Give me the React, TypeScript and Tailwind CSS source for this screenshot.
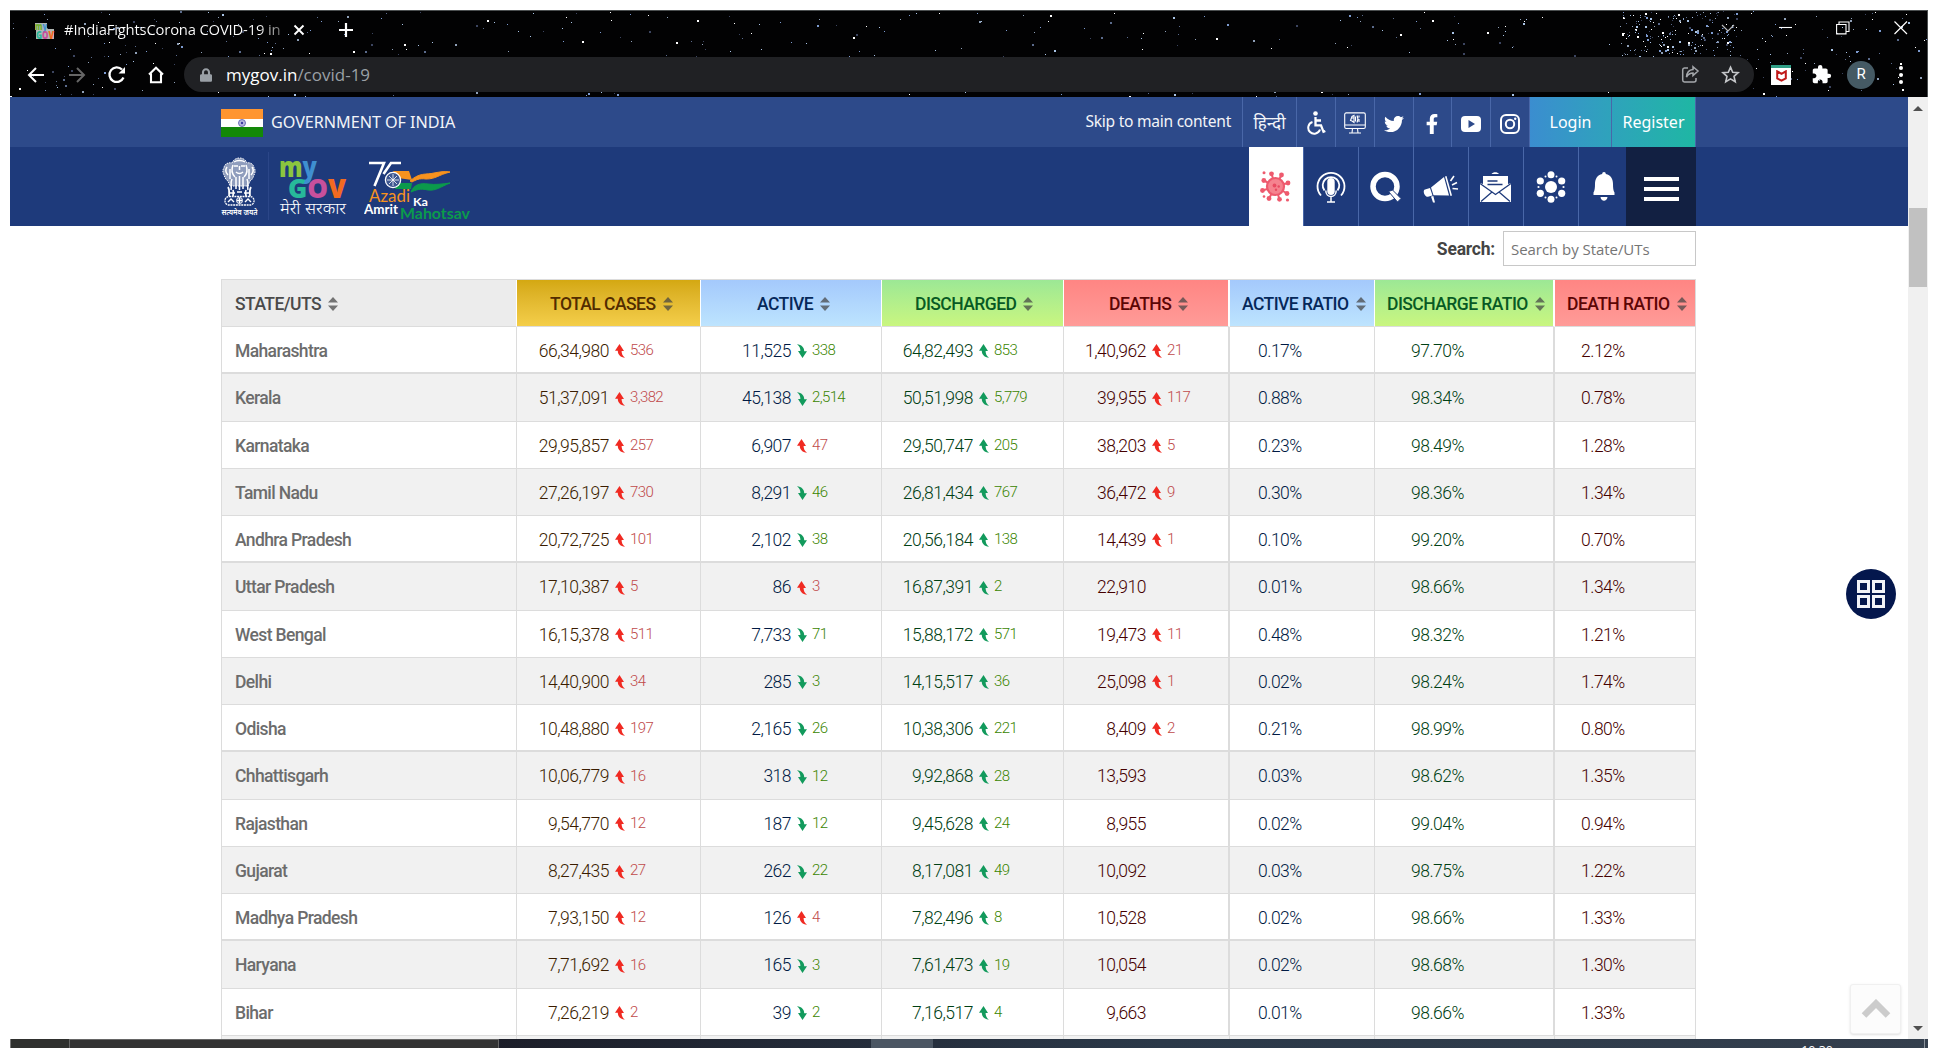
import React from "react";
import { FaTwitter, FaFacebookF, FaLock } from "react-icons/fa";
import { MdExtension } from "react-icons/md";

type Dir = "u" | "d";
type Row = {
  state: string;
  total: [string, string];
  active: [string, string, Dir];
  discharged: [string, string];
  deaths: [string, string];
  ratios: [string, string, string];
};

const r = (
  state: string, t: string, td: string, a: string, ad: string, dir: Dir,
  d: string, dd: string, x: string, xd: string, r1: string, r2: string, r3: string,
): Row => ({ state, total: [t, td], active: [a, ad, dir], discharged: [d, dd], deaths: [x, xd], ratios: [r1, r2, r3] });

const rows: Row[] = [
  r("Maharashtra", "66,34,980", "536", "11,525", "338", "d", "64,82,493", "853", "1,40,962", "21", "0.17%", "97.70%", "2.12%"),
  r("Kerala", "51,37,091", "3,382", "45,138", "2,514", "d", "50,51,998", "5,779", "39,955", "117", "0.88%", "98.34%", "0.78%"),
  r("Karnataka", "29,95,857", "257", "6,907", "47", "u", "29,50,747", "205", "38,203", "5", "0.23%", "98.49%", "1.28%"),
  r("Tamil Nadu", "27,26,197", "730", "8,291", "46", "d", "26,81,434", "767", "36,472", "9", "0.30%", "98.36%", "1.34%"),
  r("Andhra Pradesh", "20,72,725", "101", "2,102", "38", "d", "20,56,184", "138", "14,439", "1", "0.10%", "99.20%", "0.70%"),
  r("Uttar Pradesh", "17,10,387", "5", "86", "3", "u", "16,87,391", "2", "22,910", "", "0.01%", "98.66%", "1.34%"),
  r("West Bengal", "16,15,378", "511", "7,733", "71", "d", "15,88,172", "571", "19,473", "11", "0.48%", "98.32%", "1.21%"),
  r("Delhi", "14,40,900", "34", "285", "3", "d", "14,15,517", "36", "25,098", "1", "0.02%", "98.24%", "1.74%"),
  r("Odisha", "10,48,880", "197", "2,165", "26", "d", "10,38,306", "221", "8,409", "2", "0.21%", "98.99%", "0.80%"),
  r("Chhattisgarh", "10,06,779", "16", "318", "12", "d", "9,92,868", "28", "13,593", "", "0.03%", "98.62%", "1.35%"),
  r("Rajasthan", "9,54,770", "12", "187", "12", "d", "9,45,628", "24", "8,955", "", "0.02%", "99.04%", "0.94%"),
  r("Gujarat", "8,27,435", "27", "262", "22", "d", "8,17,081", "49", "10,092", "", "0.03%", "98.75%", "1.22%"),
  r("Madhya Pradesh", "7,93,150", "12", "126", "4", "u", "7,82,496", "8", "10,528", "", "0.02%", "98.66%", "1.33%"),
  r("Haryana", "7,71,692", "16", "165", "3", "d", "7,61,473", "19", "10,054", "", "0.02%", "98.68%", "1.30%"),
  r("Bihar", "7,26,219", "2", "39", "2", "d", "7,16,517", "4", "9,663", "", "0.01%", "98.66%", "1.33%"),
];

const GRID = "grid grid-cols-[295px_184px_181px_182px_166px_145px_180px_141px]";

function makeStars() {
  let seed = 7;
  const rnd = () => {
    seed = (seed * 1664525 + 1013904223) % 4294967296;
    return seed / 4294967296;
  };
  const tints = ["#7d9bd0", "#ffffff", "#5b6b8c", "#a9c4e6", "#3c4560", "#8fa0b8"];
  const out: { x: number; y: number; s: number; c: string }[] = [];
  const zone = (n: number, x0: number, x1: number, y0: number, y1: number) => {
    for (let i = 0; i < n; i++) {
      const s = rnd() > 0.75 ? 2 : 1;
      out.push({ x: Math.round(x0 + rnd() * (x1 - x0)), y: Math.round(y0 + rnd() * (y1 - y0)), s, c: tints[Math.floor(rnd() * 6)] });
    }
  };
  zone(130, 0, 300, 0, 87);
  zone(70, 300, 600, 0, 87);
  zone(60, 600, 900, 0, 87);
  zone(80, 900, 1300, 0, 87);
  zone(70, 1300, 1600, 0, 87);
  zone(220, 1610, 1730, 0, 46);
  zone(100, 1720, 1918, 0, 87);
  return out;
}
const stars = makeStars();

function Stars() {
  return (
    <svg className="absolute inset-0" width="1918" height="87" shapeRendering="crispEdges">
      {stars.map((s, i) => <rect key={i} x={s.x} y={s.y} width={s.s} height={s.s} fill={s.c} />)}
    </svg>
  );
}

function Favicon() {
  return (
    <svg className="mt-[2px] shrink-0" width="21" height="18" viewBox="0 0 21 18" fontFamily="Open Sans, sans-serif" fontWeight="800">
      <path d="M1 1h12v6h7v10H2V8H1z" fill="#eef4f0" fillOpacity=".75" />
      <text x="1" y="7.500" fontSize="10" textLength="12" lengthAdjust="spacingAndGlyphs"><tspan fill="#6fae2c">m</tspan><tspan fill="#3f8fd0">y</tspan></text>
      <text x="2" y="16.500" fontSize="10.500" textLength="18" lengthAdjust="spacingAndGlyphs"><tspan fill="#27b99a">G</tspan><tspan fill="#c8509c">O</tspan><tspan fill="#f26a21">V</tspan></text>
    </svg>
  );
}

function Chrome() {
  return (
    <div className="relative h-[87px] overflow-hidden border-t border-r border-[#4b4f50] bg-[#020203] font-['Open_Sans',sans-serif] text-white">
      <Stars />
      <div className="relative flex h-[46px] items-start">
        <div className="flex h-[38px] w-[300px] items-center pl-[24px]">
          <Favicon />
          <span className="ml-[9px] w-[216px] bg-gradient-to-r from-white from-90% to-[#777] to-100% bg-clip-text pb-[2px] text-[14.800px] tracking-[-0.18px] whitespace-nowrap text-transparent">#IndiaFightsCorona COVID-19 in</span>
          <svg className="ml-[13px] shrink-0" width="12" height="12" viewBox="0 0 12 12" stroke="#fff" strokeWidth="1.900"><path d="M1.500 1.500l9 9M10.500 1.500l-9 9" /></svg>
        </div>
        <svg className="mt-[11px] ml-[28px]" width="16" height="16" viewBox="0 0 16 16" stroke="#fff" strokeWidth="2.200"><path d="M8 1v14M1 8h14" /></svg>
        <svg className="mt-[12px] ml-[1366px]" width="16" height="10" viewBox="0 0 16 10" fill="none" stroke="#bbb" strokeWidth="1.200"><path d="M2 2l6 6 6-6" /></svg>
        <svg className="mt-[15px] ml-[43px]" width="14" height="4"><path d="M0 1.500h13" stroke="#fff" strokeWidth="1.100" /></svg>
        <svg className="mt-[10px] ml-[43px]" width="14" height="14" fill="none" stroke="#fff" strokeWidth="1.100"><path d="M.6 3.500h9.400v9.400H.6zM3 3.500V1h10v9.500h-3" /></svg>
        <svg className="mt-[10px] ml-[44px]" width="14" height="14" stroke="#fff" strokeWidth="1.200"><path d="M.5.5l12.500 12.500M13 .5L.5 13" /></svg>
      </div>
      <div className="relative flex h-[35px] items-center pl-[17px]">
        <svg width="18" height="18" viewBox="0 0 18 18" fill="none" stroke="#fff" strokeWidth="2"><path d="M17 9H2.500M9 2L2 9l7 7" /></svg>
        <svg className="ml-[23px]" width="18" height="18" viewBox="0 0 18 18" fill="none" stroke="#666" strokeWidth="2"><path d="M1 9h14.500M9 2l7 7-7 7" /></svg>
        <svg className="ml-[21px]" width="20" height="20" viewBox="0 0 20 20" fill="none" stroke="#fff" strokeWidth="2.300"><path d="M16.500 12.500A7.300 7.300 0 1 1 15 4.500" /><path d="M11.500 8.500H18V2z" fill="#fff" stroke="none" /></svg>
        <svg className="ml-[20px]" width="18" height="18" viewBox="0 0 18 18" fill="none" stroke="#fff" strokeWidth="2.100"><path d="M2 8.600L9 1.800l7 6.800M4 7.500v8.700h10V7.500" /></svg>
        <div className="ml-[19px] flex h-[35px] w-[1570px] items-center rounded-full bg-[#202124] pl-[17px] text-[17px]">
          <FaLock className="-ml-px h-[14px] w-[12px] text-[#9aa0a6]" />
          <span className="ml-[14px] leading-none text-white">mygov.in<span className="text-[#9aa0a6]">/covid-19</span></span>
          <svg className="ml-auto" width="19" height="19" viewBox="0 0 19 19" fill="none" stroke="#a5a8ac" strokeWidth="1.500"><path d="M7 3H3.500A2 2 0 0 0 1.700 5v10a2 2 0 0 0 1.800 2H13a2 2 0 0 0 2-2v-2" /><path d="M12 1.700l5 4.300-5 4.500V8C8.500 8 7 9.500 5.500 12 5.800 8 8 4.800 12 4.500z" /></svg>
          <svg className="mr-[14px] ml-[21px]" width="19" height="19" viewBox="0 0 20 20" fill="none" stroke="#c3c5c8" strokeWidth="1.700"><path d="M10 2.300l2.300 5.300 5.700.5-4.300 3.800 1.300 5.700-5-3-5 3 1.300-5.700L2 8.100l5.700-.5z" /></svg>
        </div>
        <span className="ml-[17px] flex h-[20px] w-[20px] items-center justify-center border-t-[3px] border-[#2f9e86] bg-white">
          <svg width="11" height="12" viewBox="0 0 11 12" fill="none" stroke="#c01818" strokeWidth="2"><path d="M1.200 1.300v7.200L5.500 10.700 9.800 8.500V1.300L5.500 3.800z" /></svg>
        </span>
        <MdExtension className="ml-[20px] h-[21px] w-[21px]" />
        <span className="ml-[15px] flex h-[28px] w-[28px] items-center justify-center rounded-full bg-[#455a64] font-['Roboto'] text-[15px]">R</span>
        <span className="ml-[24px] flex flex-col gap-[3px]">
          <i className="h-[4px] w-[4px] rounded-full bg-white" /><i className="h-[4px] w-[4px] rounded-full bg-white" /><i className="h-[4px] w-[4px] rounded-full bg-white" />
        </span>
      </div>
    </div>
  );
}

function Flag() {
  return (
    <svg className="mt-px" width="42" height="28" viewBox="0 0 42 28">
      <path fill="#ff9530" d="M0 0h42v10H0z" /><path fill="#fff" d="M0 10h42v8H0z" /><path fill="#138808" d="M0 18h42v10H0z" />
      <circle cx="21" cy="14" r="3.500" fill="#b9b9e0" stroke="#5656b0" strokeWidth=".8" /><circle cx="21" cy="14" r="1.200" fill="#3c3ca0" />
    </svg>
  );
}

function ScreenReader() {
  return (
    <svg width="22" height="22" viewBox="0 0 22 22" fill="none" stroke="#fff" strokeWidth="1.100">
      <rect x=".7" y=".9" width="20.600" height="15.600" rx="1.500" /><path d="M1 13h20M8.500 16.500L8 21M13.500 16.500l.5 4.500M5 21h12" />
      <path d="M6.500 8.500l1.500-4 2-1v7l-2-1.500zM8 6h2M11.500 4.500v5M13 3.500c1 2 1 5 0 7M15 3.500v2M15 7v3" />
    </svg>
  );
}

function TopBar() {
  const cell = "flex h-[50px] items-center justify-center border-l border-[#4967a8]";
  return (
    <div className="flex h-[50px] items-center bg-[#2d4a8a] pl-[211px] font-['Noto_Sans',sans-serif] text-[#f2f4f8]">
      <Flag />
      <span className="ml-[8px] text-[16.200px] tracking-[-0.050px]">GOVERNMENT OF INDIA</span>
      <div className="ml-auto flex items-center pr-[212px]">
        <span className="mr-[11px] text-[15.600px] tracking-[-0.27px]">Skip to main content</span>
        <span className={`${cell} w-[54px] pt-[2px] text-[17px]`}>हिन्दी</span>
        <span className={`${cell} w-[39px] pt-[2px]`}>
          <svg width="19" height="24" viewBox="0 0 19 24" fill="none" stroke="#fff" strokeWidth="2"><circle cx="8.500" cy="2.500" r="2.300" fill="#fff" stroke="none" /><path d="M8.500 6v8.300h5.500l2.500 6.500 1.800-.8M8.500 9.500h5.500" strokeWidth="2.300" /><path d="M5.500 11A6 6 0 1 0 13 18.500" /></svg>
        </span>
        <span className={`${cell} w-[39px] pt-[2px]`}><ScreenReader /></span>
        <span className={`${cell} w-[39px] pt-[3px]`}><FaTwitter className="h-[20px] w-[20px] text-white" /></span>
        <span className={`${cell} w-[38px] pt-[3px] pr-[2px]`}><FaFacebookF className="h-[20px] w-[14px] text-white" /></span>
        <span className={`${cell} w-[39px] pt-[3px]`}>
          <svg width="20" height="16" viewBox="0 0 20 16"><rect width="20" height="16" rx="4" fill="#fff" /><path d="M7.500 4l6.500 4-6.500 4z" fill="#2d4a8a" /></svg>
        </span>
        <span className={`${cell} w-[39px] pt-[3px]`}>
          <svg width="20" height="20" viewBox="0 0 20 20" fill="none" stroke="#fff" strokeWidth="2"><rect x="1" y="1" width="18" height="18" rx="5" /><circle cx="10" cy="10" r="4.200" /><circle cx="15.200" cy="4.800" r="1.200" fill="#fff" stroke="none" /></svg>
        </span>
        <div className="flex bg-gradient-to-r from-[#3b8dd0] to-[#1eb7a3] text-[16px] text-white">
          <span className={`${cell} w-[82px]`}>Login</span>
          <span className={`${cell} w-[85px] border-r`}>Register</span>
        </div>
      </div>
    </div>
  );
}

function Emblem() {
  return (
    <svg width="37" height="61" viewBox="0 0 37 61" fill="none" stroke="#fff">
      <path d="M11 6c1-3 4-5 7.500-5S25 3 26 6c4-1 7 2 7 5 2 2 1 5 0 7-1 3-2 5-4 6l-2 5H9l-2-5c-2-1-3-3-4-6-1-2-2-5 0-7 0-3 3-6 8-5z" fill="#fff" fillOpacity=".5" strokeDasharray="1.500 1" />
      <path d="M13 5c3-2 8-2 11 0M13 9h4M20 9h4M18.500 9v4M15 15c2 2 5 2 7 0M12 8c-2 5-1 9 2 12M25 8c2 5 1 9-2 12M6 10c-2 3-1 6 1 8M31 10c2 3 1 6-1 8M9 12v10M28 12v10M15 20v12M22 20v12M18.500 19v14M11 22c-2 4 0 7-1 11M26 22c2 4 0 7 1 11" strokeWidth="1.500" />
      <path d="M7 30c2 3 1 7 1 9M30 30c-2 3-1 7-1 9M12 33c1 3 0 4 0 6M25 33c-1 3 0 4 0 6M8 36h6M23 36h6M16 35h5" strokeWidth="1.700" />
      <rect x="4" y="39.500" width="29" height="8.500" rx="4" strokeDasharray="2 .7" strokeWidth="1.300" />
      <circle cx="18.500" cy="43.500" r="3" /><path d="M7 45l3-3 3 3M24 45l3-3 3 3M18.500 41v5M16 43.500h5" strokeWidth="1.400" />
      <text x="18.500" y="57.500" textAnchor="middle" fontSize="8" fontWeight="600" textLength="36" lengthAdjust="spacingAndGlyphs" fill="#fff" stroke="none" fontFamily="Noto Sans Devanagari, Noto Sans, sans-serif">सत्यमेव जयते</text>
    </svg>
  );
}

function MyGov() {
  return (
    <svg width="68" height="62" viewBox="0 0 68 62" fontFamily="Open Sans, sans-serif">
      <text x="0" y="19.500" fontSize="28" fontWeight="800" textLength="38" lengthAdjust="spacingAndGlyphs"><tspan fill="#8bc53f">m</tspan><tspan fill="#3f8fd0">y</tspan></text>
      <text x="9" y="40.500" fontSize="26" fontWeight="800" textLength="58" lengthAdjust="spacingAndGlyphs"><tspan fill="#27b99a">G</tspan><tspan fill="#c8509c">O</tspan><tspan fill="#f26a21">V</tspan></text>
      <text x="1" y="56.500" fontSize="15.500" fontWeight="300" textLength="66" lengthAdjust="spacingAndGlyphs" fill="#fff" fontFamily="Noto Sans Devanagari, Noto Sans, sans-serif">मेरी सरकार</text>
    </svg>
  );
}

function Azadi() {
  return (
    <svg width="108" height="60" viewBox="0 0 108 60" fontFamily="Lato, sans-serif">
      <path d="M5 2h15L10.500 25M37 2H27L19.500 13" fill="none" stroke="#fff" strokeWidth="2.600" />
      <path d="M29 10h16l3 9-14-2z" fill="#f7921e" /><path d="M46 20c10-9 16-6 24-8 6-1 10-2 16-1-12 3-14 7-24 7-7-1-10 1-14 3z" fill="#f7921e" stroke="#f7921e" />
      <path d="M34 22h14l-1 6H31z" fill="#0b9a4c" /><path d="M47 31c3-8 10-9 17-8 8 1 14 0 22-1-10 4-14 8-22 7-8-2-12 0-17 2z" fill="#0b9a4c" stroke="#0b9a4c" />
      <circle cx="29" cy="19" r="7.600" fill="#3d5690" stroke="#fff" strokeWidth="1.300" /><path d="M29 13v12M23 19h12M25 15l8 8M33 15l-8 8" stroke="#fff" strokeWidth=".8" />
      <text x="5" y="41" fontSize="18" textLength="41" lengthAdjust="spacingAndGlyphs" fill="#f7921e">Azadi</text>
      <text x="49" y="45" fontSize="12" textLength="15" lengthAdjust="spacingAndGlyphs" fill="#fff" fontWeight="700">Ka</text>
      <text x="0" y="53" fontSize="13" textLength="34" lengthAdjust="spacingAndGlyphs" fill="#fff" fontWeight="700">Amrit</text>
      <text x="36" y="57.500" fontSize="14.500" textLength="70" lengthAdjust="spacingAndGlyphs" fill="#0b9a4c" fontWeight="700">Mahotsav</text>
    </svg>
  );
}

function Virus() {
  const arms = [[11.5, 2.8], [21.5, 4], [28, 12], [27, 22.5], [19.5, 28.3], [9, 27.5], [2.5, 19.5], [3.8, 9.5]];
  return (
    <svg width="31" height="31" viewBox="0 0 31 31">
      {arms.map((a, i) => <g key={i}><path d={`M15.5 15.5L${a[0]} ${a[1]}`} stroke="#ee5a6e" strokeWidth="2" /><circle cx={a[0]} cy={a[1]} r="2.400" fill="#ee5a6e" /></g>)}
      <circle cx="4" cy="1.800" r="1.500" fill="#ee5a6e" /><circle cx="4" cy="25.500" r="1.300" fill="#ee5a6e" /><circle cx="27.500" cy="29" r="1.600" fill="#ee5a6e" />
      <circle cx="15.500" cy="15.500" r="8.500" fill="#f5838f" stroke="#ee5a6e" strokeWidth="2.200" />
      <circle cx="14.500" cy="14.500" r="1.900" fill="#e84b62" /><circle cx="18.700" cy="15.500" r="1.200" fill="#e84b62" /><circle cx="16" cy="18.700" r="1.200" fill="#e84b62" />
    </svg>
  );
}

function NavBar() {
  const cell = "flex h-[79px] items-center justify-center border-l border-[#4967a8]";
  return (
    <div className="flex h-[79px] bg-[#1e3a7b] pl-[211px]">
      <div className="flex pt-[10px]">
        <Emblem />
        <div className="mx-[10px] -mt-[5px] h-[68px] w-px bg-[#2b4688]" />
        <MyGov />
        <div className="ml-[17px] pt-[4px]"><Azadi /></div>
      </div>
      <div className="ml-auto flex pr-[212px]">
        <span className="flex h-[79px] w-[54px] items-center justify-center bg-white pr-px"><Virus /></span>
        <span className={`${cell} w-[55px] pr-px`}>
          <svg width="30" height="32" viewBox="0 0 30 32" fill="none" stroke="#fff" strokeWidth="1.800">
            <rect x="11.300" y="7" width="7.400" height="17" rx="3.700" fill="#fff" stroke="none" /><path d="M9.800 19.500c0 8 10.400 8 10.400 0M15 26v4.500M11 31h8" strokeWidth="1.500" />
            <path d="M8.500 19.500a8.300 8.300 0 1 1 13 0M5 24.500a13.500 13.500 0 1 1 20 0" /></svg>
        </span>
        <span className={`${cell} w-[55px]`}>
          <svg width="32" height="32" viewBox="0 0 32 32" fill="none" stroke="#fff"><circle cx="15" cy="15.500" r="12" strokeWidth="5.500" /><path d="M18.500 20.500l4-1.500 8.500 8.500-3.500 3.500z" fill="#fff" stroke="#1e3a7b" strokeWidth="1" /></svg>
        </span>
        <span className={`${cell} w-[55px] pt-[4px] pr-px`}>
          <svg width="36" height="28" viewBox="0 0 36 28" fill="#fff">
            <path d="M2 14.500l5-1.500 2.500 7.500-4.500 1.200c-3 .8-6-6-3-7.200zM8 12.500L21 2l5 18.500-15.500-.3zM22 1.500l1.500-.5 5.500 19.500-1.500.5zM8 21.500l2.300-.5 1.700 6.500h-2z" /><path d="M27.500 6l3.500-5M29 10l5-2.500M29.500 13.500l5.500.5" stroke="#fff" strokeWidth="1.600" />
          </svg>
        </span>
        <span className={`${cell} w-[55px] pr-[2px]`}>
          <svg width="31" height="31" viewBox="0 0 31 31"><path fill="#fff" d="M11.500 3C13 .5 17.500.5 19 3zM3 5h25v8l3-1v19H0V12l3 1z" /><path d="M7.500 10h10M7.500 13.500h15" stroke="#1e3a7b" strokeWidth="1.600" /><path d="M0 12.500l15.500 11 15.500-11M1 30.500L12 21M30 30.500L19 21" fill="none" stroke="#1e3a7b" strokeWidth="1.300" /></svg>
        </span>
        <span className={`${cell} w-[55px] pr-px`}>
          <svg width="30" height="32" viewBox="0 0 30 32" fill="#fff"><circle cx="15" cy="16" r="6" /><circle cx="15" cy="3.700" r="3.500" /><circle cx="15" cy="28.300" r="3.500" /><circle cx="4.300" cy="10" r="3.600" /><circle cx="25.700" cy="10" r="3.600" /><circle cx="4.300" cy="22.300" r="3.600" /><circle cx="25.700" cy="22.300" r="3.600" /><circle cx="9.500" cy="5.500" r="1" /><circle cx="20.500" cy="5.500" r="1" /><circle cx="9.500" cy="26.500" r="1" /><circle cx="20.500" cy="26.500" r="1" /><circle cx="2.500" cy="16" r="1.100" /><circle cx="27.500" cy="16" r="1.100" /></svg>
        </span>
        <span className={`${cell} w-[48px] pl-[2px]`}>
          <svg width="22" height="29" viewBox="0 0 22 29" fill="#fff"><path d="M11 0c1.200 0 1.800.8 1.800 2 5 1 7.200 5 7.200 10 0 4 .3 6.500 1.500 8.500V23H.5v-2.500C1.700 18.500 2 16 2 12c0-5 2.200-9 7.200-10 0-1.200.6-2 1.800-2zM7.500 25h7c-.5 5-6.500 5-7 0z" /></svg>
        </span>
        <span className="flex w-[70px] flex-col items-center justify-center gap-[6px] bg-[#122042] pt-[6px] pb-[2px]">
          <i className="h-[4px] w-[35px] bg-white" /><i className="h-[4px] w-[35px] bg-white" /><i className="h-[4px] w-[35px] bg-white" />
        </span>
      </div>
    </div>
  );
}

function Sort() {
  return (
    <svg className="ml-[7px] shrink-0" width="10" height="14" viewBox="0 0 10 14" fill="#444" fillOpacity=".72"><path d="M5 0l5 5.500H0zM5 14l5-5.500H0z" /></svg>
  );
}

function Head({ label, cls }: { label: string; cls: string }) {
  return (
    <div className={`flex h-[47px] items-center border-b border-b-[#dcdcdc] pt-[2px] ${cls}`}>
      <span className="whitespace-nowrap">{label}</span><Sort />
    </div>
  );
}

function Arrow({ dir, color }: { dir: Dir; color: string }) {
  return (
    <svg className={dir === "d" ? "rotate-180" : ""} width="10" height="14" viewBox="0 0 10 14" fill={color}><path d="M4.500 0L0 6.700h2.800C2.800 10.500 5.500 13.500 10 13.700 7.500 12 6.600 9.500 6.600 7H9z" /></svg>
  );
}

function Num({ w, value, delta, dir = "u", good, cls }: { w: string; value: string; delta: string; dir?: Dir; good: boolean; cls: string }) {
  return (
    <div className={`flex items-center border-r border-[#dcdcdc] pt-[2px] whitespace-nowrap ${cls}`}>
      <span className={`shrink-0 text-right tracking-[-0.5px] ${w}`}>{value}</span>
      {delta && (
        <>
          <span className="mt-px ml-[6px] shrink-0"><Arrow dir={dir} color={good ? "#129a5c" : "#f02a22"} /></span>
          <span className={`ml-[5px] pb-[2px] text-[15px] leading-[18px] ${good ? "text-[#3a8500]" : "text-[#c04a4a]"}`}>{delta}</span>
        </>
      )}
    </div>
  );
}

function Ratio({ value, cls }: { value: string; cls: string }) {
  return <div className={`flex items-center border-r border-[#dcdcdc] pt-[2px] tracking-[-0.5px] ${cls}`}>{value}</div>;
}

const rowBorder = (i: number) => (i % 4 === 0 ? "border-b-2" : "border-b");

function Table() {
  return (
    <div className="ml-[211px] w-[1475px] border-t border-l border-[#dcdcdc] font-['Roboto',sans-serif] text-[17.500px] tracking-[-0.625px]">
      <div className={`${GRID} font-medium tracking-[-0.540px]`}>
        <Head label="STATE/UTS" cls="border-r border-r-white bg-[#ececec] pl-[13px] text-[#4a4a4a]" />
        <Head label="TOTAL CASES" cls="border-r border-r-white bg-gradient-to-b from-[#d4a811] to-[#f4ce49] pl-[33px] text-[#522c00]" />
        <Head label="ACTIVE" cls="border-r border-r-white bg-gradient-to-b from-[#a4c9fc] to-[#bde4fe] pl-[56px] text-[#05285a]" />
        <Head label="DISCHARGED" cls="border-r border-r-white bg-gradient-to-b from-[#9ce895] to-[#c9f67f] pl-[33px] text-[#075a24]" />
        <Head label="DEATHS" cls="border-r-2 border-r-white bg-gradient-to-b from-[#ff8583] to-[#ff9b98] pl-[45px] text-[#5c0505]" />
        <Head label="ACTIVE RATIO" cls="border-r border-r-white bg-gradient-to-b from-[#a4c9fc] to-[#bde4fe] pl-[12px] text-[#05285a]" />
        <Head label="DISCHARGE RATIO" cls="border-r-2 border-r-white bg-gradient-to-b from-[#9ce895] to-[#c9f67f] pl-[12px] text-[#075a24]" />
        <Head label="DEATH RATIO" cls="border-r border-r-[#dcdcdc] bg-gradient-to-b from-[#ff8583] to-[#ff9b98] pl-[12px] text-[#5c0505]" />
      </div>
      {rows.map((x, i) => (
        <div key={x.state} className={`${GRID} h-[47.270px] border-[#dcdcdc] font-light ${rowBorder(i)} ${i % 2 ? "bg-[#f1f1f1]" : "bg-white"}`}>
          <div className="flex items-center border-r border-[#dcdcdc] pt-[2px] pl-[13px] font-medium text-[#6c6c6c]">{x.state}</div>
          <Num w="w-[92px]" value={x.total[0]} delta={x.total[1]} good={false} cls="text-[#3a1c00]" />
          <Num w="w-[90px]" value={x.active[0]} delta={x.active[1]} dir={x.active[2]} good={x.active[2] === "d"} cls="text-[#001a44]" />
          <Num w="w-[91px]" value={x.discharged[0]} delta={x.discharged[1]} good cls="text-[#004014]" />
          <Num w="w-[82px]" value={x.deaths[0]} delta={x.deaths[1]} good={false} cls="border-r-2 text-[#450000]" />
          <Ratio value={x.ratios[0]} cls="pl-[28px] text-[#001a44]" />
          <Ratio value={x.ratios[1]} cls="border-r-2 pl-[36px] text-[#004014]" />
          <Ratio value={x.ratios[2]} cls="pl-[26px] text-[#450000]" />
        </div>
      ))}
      <div className={`${GRID} h-[6px] bg-[#f1f1f1]`}>
        {[0, 1, 2, 3, 4, 5, 6, 7].map((n) => <div key={n} className="border-r border-[#dcdcdc]" />)}
      </div>
    </div>
  );
}

function Scrollbar() {
  return (
    <div className="flex w-[20px] flex-col items-center bg-[#f0f0f0] pt-[9px]">
      <svg width="10" height="5"><path d="M5 0l5 5H0z" fill="#505050" /></svg>
      <div className="mt-[97px] h-[79px] w-[18px] bg-[#c1c1c1]" />
      <svg className="mt-auto mb-[8px]" width="10" height="5"><path d="M0 0h10L5 5z" fill="#505050" /></svg>
    </div>
  );
}

export default function App() {
  return (
    <div className="h-[1048px] w-[1938px] overflow-hidden bg-white pt-[10px] pl-[10px]">
      <div className="w-[1918px]">
        <Chrome />
        <div className="relative flex h-[942px] overflow-hidden">
          <div className="w-[1898px] overflow-hidden">
            <TopBar />
            <NavBar />
            <div className="flex h-[53px] items-start justify-end pt-[5px] pr-[212px]">
              <span className="mt-[5px] mr-[8px] font-['Roboto'] text-[17.500px] font-bold tracking-[-0.22px] text-[#444]">Search:</span>
              <span className="flex h-[35px] w-[193px] items-center border border-[#c8c8c8] pt-[2px] pl-[7px] font-['Open_Sans'] text-[15px] tracking-[-0.050px] text-[#757575]">Search by State/UTs</span>
            </div>
            <Table />
          </div>
          <Scrollbar />
          <div className="absolute top-[472px] left-[1836px] flex h-[50px] w-[50px] items-center justify-center rounded-full bg-[#04174d]">
            <div className="grid grid-cols-2 gap-[2px] pr-px">
              {[0, 1, 2, 3].map((n) => <i key={n} className="h-[13px] w-[13px] border-[3px] border-[#f1f3f8]" />)}
            </div>
          </div>
          <div className="absolute top-[887px] left-[1840px] flex h-[50px] w-[51px] items-center justify-center rounded-[3px] border border-[#f0f0f0] bg-[#fcfcfc] shadow-sm">
            <svg width="30" height="20" viewBox="0 0 30 20"><path d="M3 16.500L15 4.500l12 12" fill="none" stroke="#ccc" strokeWidth="6.500" /></svg>
          </div>
        </div>
        <div className="flex h-[9px] overflow-hidden bg-gradient-to-r from-[#1c1e29] from-25% via-[#2b3949] via-60% to-[#343f4d]">
          <div className="w-[59px] border-l border-[#777] bg-[#2f302e]" />
          <div className="w-[430px] border-t border-r border-l border-[#666] bg-[#333]" />
          <div className="ml-[372px] w-[62px] bg-[#4b5663]" />
          <div className="ml-auto flex pt-[6px] pr-[91px] font-['Open_Sans'] text-[12.500px] leading-[12px] text-white">10:30</div>
          <div className="mr-[3px] w-px bg-[#8b929b]" />
        </div>
      </div>
    </div>
  );
}
